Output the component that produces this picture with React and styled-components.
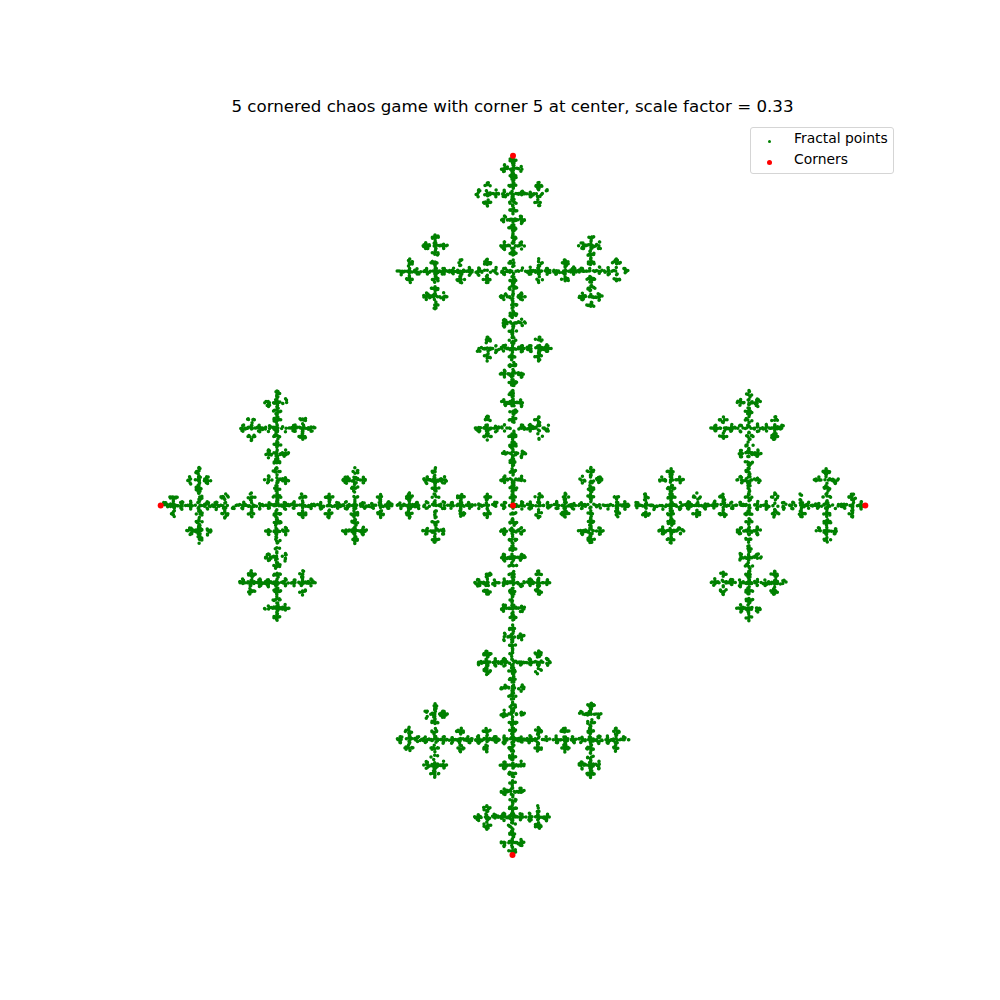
import React, { useMemo } from 'react';
import styled, { createGlobalStyle } from 'styled-components';

const GlobalStyle = createGlobalStyle`
  html, body {
    margin: 0;
    padding: 0;
    background: #fff;
  }
`;

const Figure = styled.div`
  width: 1000px;
  height: 1000px;
  box-sizing: border-box;
  padding: 97px 100px 0 125px;
  background: #fff;
  font-family: 'DejaVu Sans', sans-serif;
  color: #000;
`;

const Title = styled.div`
  width: 775px;
  height: 23px;
  font-size: 16.67px;
  line-height: 20px;
  text-align: center;
  white-space: nowrap;
`;

const Axes = styled.div`
  position: relative;
  width: 775px;
  height: 770px;
`;

const Plot = styled.svg`
  display: block;
`;

const Legend = styled.div`
  position: absolute;
  top: 7px;
  right: 6px;
  box-sizing: border-box;
  width: 144px;
  height: 47px;
  padding: 0 0 0 5px;
  border: 1px solid #d5d5d5;
  border-radius: 3px;
  background: rgba(255, 255, 255, 0.8);
  display: flex;
  flex-direction: column;
`;

const LegendRow = styled.div`
  display: flex;
  align-items: center;
  height: 21px;
  font-size: 13.89px;
  line-height: 21px;
  white-space: nowrap;
`;

const MarkerSlot = styled.span`
  width: 38px;
  padding-left: 10px;
  box-sizing: border-box;
  display: flex;
  align-items: center;
  padding-top: 6px;
`;

const Marker = styled.span`
  display: block;
  width: ${(p) => p.$size}px;
  height: ${(p) => p.$size}px;
  margin-left: ${(p) => (6 - p.$size) / 2}px;
  border-radius: 50%;
  background: ${(p) => p.$color};
`;

const CENTER_X = 388;
const CENTER_Y = 385.4;
const RADIUS_X = 352.3;
const RADIUS_Y = 349.6;

const CORNERS = [
  [CENTER_X, CENTER_Y - RADIUS_Y],
  [CENTER_X + RADIUS_X, CENTER_Y],
  [CENTER_X - 0.5, CENTER_Y + RADIUS_Y],
  [CENTER_X - RADIUS_X, CENTER_Y],
  [CENTER_X, CENTER_Y],
];

const SCALE = 0.33;
const POINT_COUNT = 7500;

// small seeded generator so every render gives the same fractal
const makeRandom = (seed) => () => {
  seed = (seed + 0x6d2b79f5) | 0;
  let t = Math.imul(seed ^ (seed >>> 15), 1 | seed);
  t = (t + Math.imul(t ^ (t >>> 7), 61 | t)) ^ t;
  return ((t ^ (t >>> 14)) >>> 0) / 4294967296;
};

const buildPoints = () => {
  const random = makeRandom(77);
  let x = CENTER_X;
  let y = CENTER_Y;
  const parts = [];
  for (let i = 0; i < POINT_COUNT + 20; i++) {
    const [cx, cy] = CORNERS[Math.floor(random() * CORNERS.length)];
    x = cx + (x - cx) * SCALE;
    y = cy + (y - cy) * SCALE;
    if (i >= 20) parts.push(`M${x.toFixed(2)} ${y.toFixed(2)}h0`);
  }
  return parts.join('');
};

const App = () => {
  const points = useMemo(buildPoints, []);

  return (
    <Figure>
      <GlobalStyle />
      <Title>5 cornered chaos game with corner 5 at center, scale factor = 0.33</Title>
      <Axes>
        <Plot width="775" height="770" viewBox="0 0 775 770">
          <path d={points} fill="none" stroke="#008000" strokeWidth="3.5" strokeLinecap="round" />
          {CORNERS.map(([x, y]) => (
            <circle key={`${x}-${y}`} cx={x} cy={y} r="3" fill="#ff0000" />
          ))}
        </Plot>
        <Legend>
          <LegendRow>
            <MarkerSlot>
              <Marker $size={3} $color="#008000" />
            </MarkerSlot>
            Fractal points
          </LegendRow>
          <LegendRow>
            <MarkerSlot>
              <Marker $size={5} $color="#ff0000" />
            </MarkerSlot>
            Corners
          </LegendRow>
        </Legend>
      </Axes>
    </Figure>
  );
};

export default App;
